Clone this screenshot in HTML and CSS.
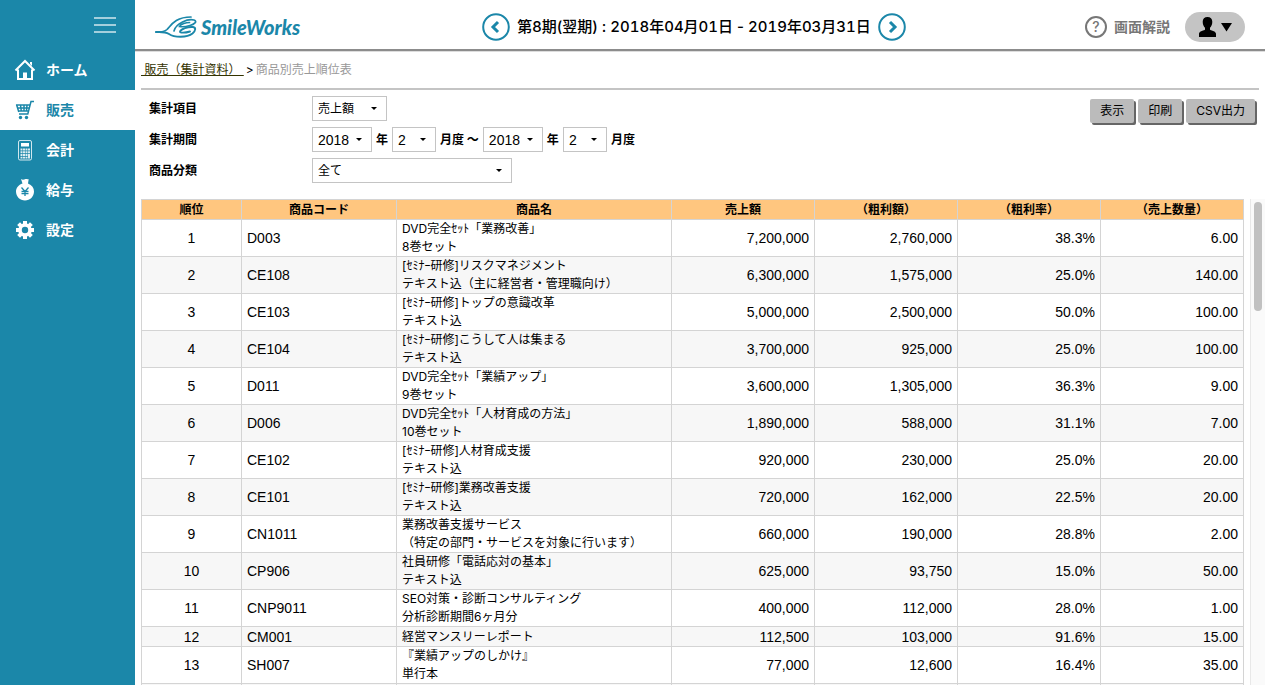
FILE: index.html
```html
<!DOCTYPE html>
<html lang="ja">
<head>
<meta charset="utf-8">
<title>商品別売上順位表</title>
<link rel="stylesheet" href="styles.css">
</head>
<body>
<div class="app">
  <nav class="sidebar">
    <button class="menu-toggle" type="button" aria-label="メニュー"><span></span><span></span><span></span></button>
    <a class="nav-item" href="#"><svg viewBox="0 0 22 22"><path d="M1.500 11.500 11 2l9.500 9.500M4 10.500V20h14v-9.500" fill="none" stroke="currentColor" stroke-width="2"/><path d="M9 13.500h4V20H9zM16 3h2v4l-2-2z" fill="currentColor"/></svg>ホーム</a>
    <a class="nav-item active" href="#"><svg viewBox="0 0 22 22"><path d="M20 2.500h-3L13.800 15H5M2 6h14M3 9h12.300M4 12h10.500M2.500 5.500 4.800 13M6.500 6l.8 6M10 6v6M13 6l-.5 6" fill="none" stroke="currentColor" stroke-width="1.500"/><circle cx="6.500" cy="18.500" r="1.700" fill="currentColor"/><circle cx="12.500" cy="18.500" r="1.700" fill="currentColor"/></svg>販売</a>
    <a class="nav-item" href="#"><svg viewBox="0 0 22 22"><rect x="4.500" y="1.500" width="13" height="19.500" rx="1.500" fill="none" stroke="currentColor" opacity=".8"/><path d="M7 4h8v3.500H7z" fill="currentColor"/><path d="M6.500 9.500h2v2h-2zm2.500 0h2v2H9zm2.500 0h2v2h-2zm2.500 0h2v2h-2zM6.500 12.200h2v2h-2zm2.500 0h2v2H9zm2.500 0h2v2h-2zm2.500 0h2v2h-2zM6.500 15h2v2h-2zM9 15h2v2H9zm2.500 0h2v2h-2zm2.500 0h2v4.500h-2zM6.500 17.700h2v1.800h-2zm2.500 0h2v1.800H9zm2.500 0h2v1.800h-2z" fill="currentColor" opacity=".85"/></svg>会計</a>
    <a class="nav-item" href="#"><svg viewBox="0 0 22 22"><path d="M7 0c2 1.500 3 .5 4.500 0s2.500.8 3.200 0L14 4.500c4 1.500 6 4.500 6 8 0 5-4 9-9 9s-9-4-9-9c0-3.500 2.500-6.800 6.500-8z" fill="currentColor"/><path class="yen" d="m7.500 8.500 3.500 4 3.500-4M11 12v5M7.500 12.500h7M7.500 14.700h7" fill="none" stroke-width="1.300"/></svg>給与</a>
    <a class="nav-item" href="#"><svg viewBox="0 0 22 22"><circle cx="11" cy="11" r="5" fill="none" stroke="currentColor" stroke-width="3.600"/><g stroke="currentColor" stroke-width="4"><path d="M11 2v3M11 17v3M2 11h3M17 11h3M4.600 4.600l2.200 2.200M15.200 15.200l2.200 2.200M4.600 17.400l2.200-2.200M15.200 6.800l2.200-2.200"/></g></svg>設定</a>
  </nav>
  <div class="main">
    <header class="header">
      <a class="logo" href="#"><svg viewBox="0 0 44 24" fill="none" stroke="currentColor" stroke-linecap="round"><path d="M1 17c4 0 8 .3 11-2.500C16 10.500 20 2 36 2" stroke-width="1.700"/><path d="M1 17c5 .2 9-.5 13 2 5 3.500 18 4 23.500-.5C41 15.500 41 12.500 38 12c-5-.5-12 2-13 4.500-.5 1.600 5 1.500 10 0" stroke-width="1.900"/><path d="M19 16C21 8 33 3.500 39 5c4 1.500 0 4.500-4 5.500-3.500 1-8 1.500-10.500 1 1-2.500 7-4 10-4" stroke-width="1.700"/></svg><span>SmileWorks</span></a>
      <div class="term">
        <button class="round" type="button" aria-label="前期"><svg viewBox="0 0 28 28"><circle cx="14" cy="14" r="12.800"/><path class="chev" d="m16 9-5 5 5 5"/></svg></button>
        <span>第8期(翌期) : <time datetime="2018-04-01">2018年04月01日</time> - <time datetime="2019-03-31">2019年03月31日</time></span>
        <button class="round" type="button" aria-label="次期"><svg viewBox="0 0 28 28"><circle cx="14" cy="14" r="12.800"/><path class="chev" d="m12 9 5 5-5 5"/></svg></button>
      </div>
      <div class="tools">
        <a class="help" href="#"><span class="help-mark">?</span>画面解説</a>
        <button class="user" type="button" aria-label="ユーザー"><svg viewBox="0 0 34 20"><path d="M9.500 0c3 0 4.800 2 4.800 4.800 0 2.800-1 4.700-2.300 6v2c2.500 1.200 6 1.700 6 4.200v3H1v-3c0-2.500 3.500-3 6-4.200v-2c-1.300-1.300-2.300-3.200-2.300-6C4.700 2 6.500 0 9.500 0zM23 6h11l-5.500 8.500z"/></svg></button>
      </div>
    </header>
    <main class="content">
      <div class="crumbs"><a href="#">&nbsp;販売（集計資料）&nbsp;</a><span class="sep">&gt;</span><span class="here">商品別売上順位表</span></div>
      <form class="filters">
        <div class="fields">
          <label for="item">集計項目</label>
          <div class="field"><select id="item" class="w-item"><option>売上額</option></select></div>
          <label for="y1">集計期間</label>
          <div class="field"><select id="y1" class="w-year"><option>2018</option></select><label for="m1" class="unit">年</label><select id="m1" class="w-month"><option>2</option></select><span class="unit">月度 〜</span><select id="y2" class="w-year" aria-label="終了年"><option>2018</option></select><label for="m2" class="unit">年</label><select id="m2" class="w-month"><option>2</option></select><span class="unit">月度</span></div>
          <label for="cat">商品分類</label>
          <div class="field"><select id="cat" class="w-cat"><option>全て</option></select></div>
        </div>
        <div class="actions"><button type="button">表示</button><button type="button">印刷</button><button type="button">CSV出力</button></div>
      </form>
      <div class="list">
        <div class="table-wrap">
        <table>
          <colgroup><col class="c-rank"><col class="c-code"><col class="c-name"><col><col><col><col></colgroup>
          <thead><tr><th>順位</th><th>商品コード</th><th>商品名</th><th>売上額</th><th>（粗利額）</th><th>（粗利率）</th><th>（売上数量）</th></tr></thead>
          <tbody>
            <tr><td>1</td><td>D003</td><td>DVD完全ｾｯﾄ「業務改善」<br>8巻セット</td><td>7,200,000</td><td>2,760,000</td><td>38.3%</td><td>6.00</td></tr>
            <tr><td>2</td><td>CE108</td><td>[ｾﾐﾅｰ研修]リスクマネジメント<br>テキスト込（主に経営者・管理職向け）</td><td>6,300,000</td><td>1,575,000</td><td>25.0%</td><td>140.00</td></tr>
            <tr><td>3</td><td>CE103</td><td>[ｾﾐﾅｰ研修]トップの意識改革<br>テキスト込</td><td>5,000,000</td><td>2,500,000</td><td>50.0%</td><td>100.00</td></tr>
            <tr><td>4</td><td>CE104</td><td>[ｾﾐﾅｰ研修]こうして人は集まる<br>テキスト込</td><td>3,700,000</td><td>925,000</td><td>25.0%</td><td>100.00</td></tr>
            <tr><td>5</td><td>D011</td><td>DVD完全ｾｯﾄ「業績アップ」<br>9巻セット</td><td>3,600,000</td><td>1,305,000</td><td>36.3%</td><td>9.00</td></tr>
            <tr><td>6</td><td>D006</td><td>DVD完全ｾｯﾄ「人材育成の方法」<br>10巻セット</td><td>1,890,000</td><td>588,000</td><td>31.1%</td><td>7.00</td></tr>
            <tr><td>7</td><td>CE102</td><td>[ｾﾐﾅｰ研修]人材育成支援<br>テキスト込</td><td>920,000</td><td>230,000</td><td>25.0%</td><td>20.00</td></tr>
            <tr><td>8</td><td>CE101</td><td>[ｾﾐﾅｰ研修]業務改善支援<br>テキスト込</td><td>720,000</td><td>162,000</td><td>22.5%</td><td>20.00</td></tr>
            <tr><td>9</td><td>CN1011</td><td>業務改善支援サービス<br>（特定の部門・サービスを対象に行います）</td><td>660,000</td><td>190,000</td><td>28.8%</td><td>2.00</td></tr>
            <tr><td>10</td><td>CP906</td><td>社員研修「電話応対の基本」<br>テキスト込</td><td>625,000</td><td>93,750</td><td>15.0%</td><td>50.00</td></tr>
            <tr><td>11</td><td>CNP9011</td><td>SEO対策・診断コンサルティング<br>分析診断期間6ヶ月分</td><td>400,000</td><td>112,000</td><td>28.0%</td><td>1.00</td></tr>
            <tr><td>12</td><td>CM001</td><td>経営マンスリーレポート</td><td>112,500</td><td>103,000</td><td>91.6%</td><td>15.00</td></tr>
            <tr><td>13</td><td>SH007</td><td>『業績アップのしかけ』<br>単行本</td><td>77,000</td><td>12,600</td><td>16.4%</td><td>35.00</td></tr>
            <tr><td></td><td></td><td></td><td></td><td></td><td></td><td></td></tr>
          </tbody>
        </table>
        </div>
        <div class="track"><div class="thumb"></div></div>
      </div>
    </main>
  </div>
</div>
</body>
</html>
```

FILE: styles.css
```css
* { box-sizing: border-box; }
body {
  margin: 0;
  background: #fff;
  color: #000;
  font: 12px/18px Inter, "Noto Sans CJK JP", sans-serif;
}
button, select { font: inherit; color: inherit; margin: 0; }
time { font-variant-numeric: tabular-nums; }
a { color: inherit; text-decoration: none; }
svg { display: block; }
.app { display: flex; height: 100vh; overflow: hidden; }

.sidebar { flex: none; width: 135px; background: #1b87a9; display: flex; flex-direction: column; }
.menu-toggle {
  align-self: flex-end;
  display: flex; flex-direction: column; justify-content: center; gap: 5px;
  height: 50px; padding: 0; margin-right: 19px;
  border: 0; background: none;
}
.menu-toggle span { width: 22px; height: 2px; background: #a4cfdd; }
.nav-item {
  display: flex; align-items: center; gap: 10px;
  height: 40px; padding-left: 14px;
  color: #fff; font-size: 14px; font-weight: 600;
}
.nav-item svg { width: 22px; height: 22px; }
.nav-item.active { background: #fff; color: #1b87a9; }
.yen { stroke: #1b87a9; }

.main { flex: 1; min-width: 0; display: flex; flex-direction: column; }
.header {
  flex: none;
  display: grid; grid-template-columns: 1fr auto 1fr; align-items: center;
  height: 51px; padding: 4px 20px 0;
  border-bottom: 2px solid #8c8c8c;
  box-shadow: 0 1px 0 #ddd;
}
.logo { display: flex; align-items: center; gap: 2px; color: #1b87a9; font: italic 900 20px/24px Lato, sans-serif; }
.logo svg { width: 44px; height: 24px; }
.term { display: flex; align-items: center; gap: 7px; margin-right: 12px; font-size: 15px; font-weight: 500; }
.round { width: 28px; height: 28px; padding: 0; border: 0; background: none; }
.round svg { width: 28px; height: 28px; fill: none; stroke: #1b87a9; stroke-width: 2; }
.round .chev { stroke-width: 3; }
.tools { display: flex; align-items: center; justify-content: flex-end; gap: 15px; }
.help { display: flex; align-items: center; gap: 7px; color: #777; font-size: 14px; font-weight: 600; }
.help-mark { width: 22px; height: 22px; border: 2px solid #777; border-radius: 50%; text-align: center; font-weight: 500; }
.user { display: flex; align-items: center; justify-content: center; width: 60px; height: 30px; border: 0; border-radius: 15px; background: #c4c4c4; padding: 0; }
.user svg { width: 34px; height: 20px; }

.content { flex: 1; min-height: 0; display: flex; flex-direction: column; padding-left: 6px; }
.crumbs {
  flex: none;
  display: flex; align-items: center; gap: 2px;
  height: 39px; margin-right: 6px;
  border-bottom: 2px solid #c4c4c4;
}
.crumbs a { color: #330; text-decoration: underline; }
.here { color: #999; }
.filters { flex: none; display: flex; justify-content: space-between; align-items: flex-start; padding: 6px 8px 17px; height: 109px; }
.fields { display: grid; grid-template-columns: 163px auto; row-gap: 6px; align-items: center; font-weight: 700; }
.field { display: flex; align-items: center; }
.unit { padding: 0 4px; }
select {
  appearance: none;
  height: 25px; padding: 0 5px;
  border: 1px solid #c4c4c4; border-radius: 0;
  background: #fff url("data:image/svg+xml,%3Csvg xmlns='http://www.w3.org/2000/svg' width='6' height='3'%3E%3Cpath d='M0 0h6L3 3z'/%3E%3C/svg%3E") no-repeat right 9px center;
  font-weight: 400;
}
.w-item { width: 75px; }
.w-year { width: 60px; }
.w-month { width: 44px; }
.w-year, .w-month { font-family: "Liberation Sans", sans-serif; font-size: 14px; }
.w-cat { width: 200px; }
.actions { display: flex; gap: 4px; padding-top: 3px; margin-right: 2px; }
.actions button {
  height: 24px; padding: 0 10px;
  border: 0; border-radius: 2px;
  background: #bbb; box-shadow: 2px 2px 0 #666;
}

.list { flex: 1; min-height: 0; display: flex; gap: 6px; }
.table-wrap { flex: 1; min-width: 0; overflow: hidden; }
table { width: 100%; table-layout: fixed; border-collapse: collapse; }
.c-rank { width: 100px; }
.c-code { width: 155px; }
.c-name { width: 275px; }
th, td { border: 1px solid #d4d4d4; padding: 0 5px; text-align: right; white-space: nowrap; }
th { height: 20px; background: #ffc67f; text-align: center; font-weight: 700; }
td { height: 20px; font-family: "Liberation Sans", sans-serif; font-size: 14px; }
td:nth-child(1) { text-align: center; }
td:nth-child(2) { text-align: left; }
td:nth-child(3) { text-align: left; font-family: Inter, "Noto Sans CJK JP", sans-serif; font-size: 12px; }
tbody tr:nth-child(even) { background: #f7f7f7; }
.track { flex: none; width: 15px; padding: 3px 3px 0; background: #fafafa; border-left: 1px solid #e8e8e8; }
.thumb { width: 8px; height: 109px; border-radius: 4px; background: #c1c1c1; }
```
